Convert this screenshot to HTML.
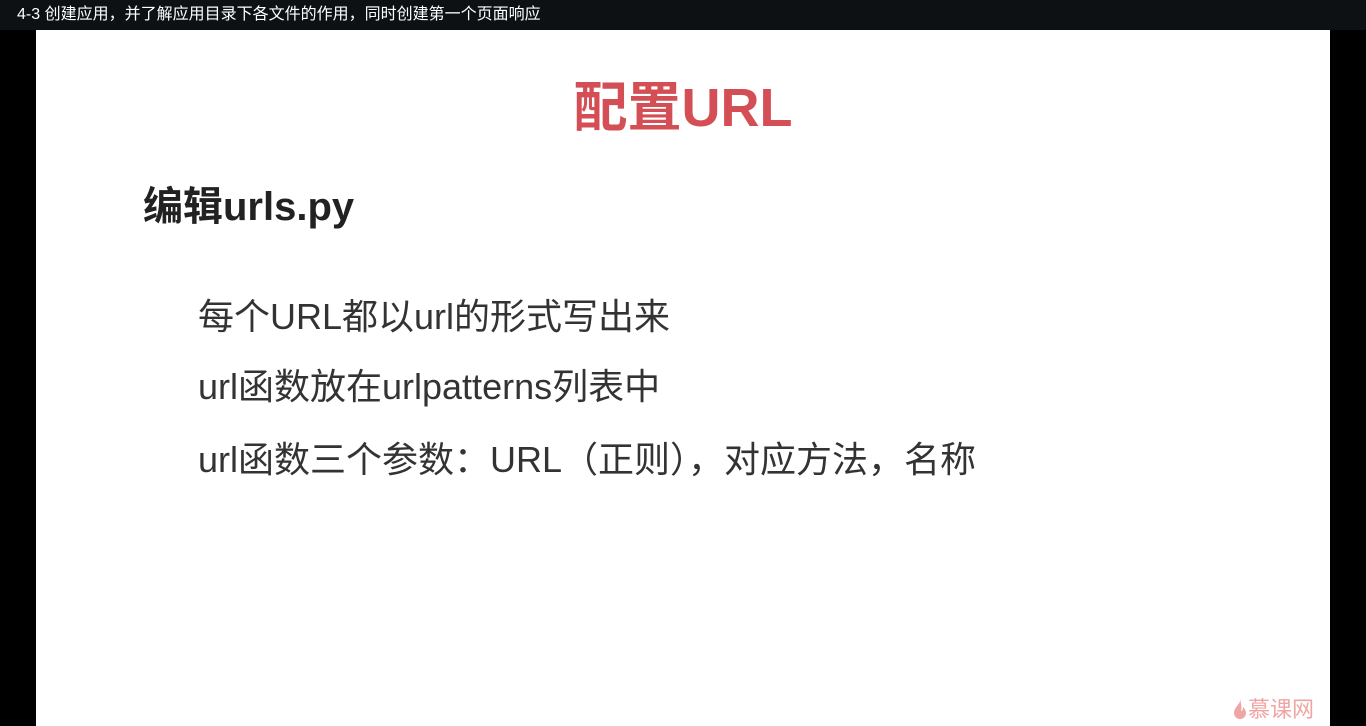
<!DOCTYPE html>
<html><head><meta charset="utf-8"><style>
body{margin:0;width:1366px;height:726px;background:#000;position:relative;overflow:hidden;font-family:"Liberation Sans","Noto Sans CJK SC",sans-serif}
.top{position:absolute;left:0;top:0;width:1366px;height:30px;background:#0d1114;color:#fff;font-size:16px;line-height:30px;padding-left:17px;box-sizing:border-box}
.slide{position:absolute;left:36px;top:30px;width:1294px;height:696px;background:#fff}
.t{position:absolute;top:43px;left:0;width:100%;text-align:center;color:#d34f55;font-weight:bold;font-size:54px;line-height:70px;padding-left:0}
.h{position:absolute;left:107px;top:152px;font-size:40px;font-weight:bold;color:#222;line-height:50px}
.b{position:absolute;left:162px;font-size:36px;color:#333;line-height:44px}
.logo{position:absolute;left:1232px;top:695px;color:#f0a5a5;font-size:22px;line-height:30px}
</style></head><body>
<div class="top">4-3 创建应用，并了解应用目录下各文件的作用，同时创建第一个页面响应</div>
<div class="slide">
<div class="t">配置URL</div>
<div class="h">编辑urls.py</div>
<div class="b" style="top:265px">每个URL都以url的形式写出来</div>
<div class="b" style="top:335px">url函数放在urlpatterns列表中</div>
<div class="b" style="top:408px">url函数三个参数：URL（正则），对应方法，名称</div>
</div>
<div class="logo"><svg width="16" height="22" viewBox="0 0 16 22" style="vertical-align:-3px"><path d="M8 1C9 6 2 9 2 15a6 6 0 0 0 12 0c0-3-2-5-3-6 0 3-1 4-2 4 1-4 0-8-1-12z" fill="#f0a5a5"/></svg>慕课网</div>
</body></html>
